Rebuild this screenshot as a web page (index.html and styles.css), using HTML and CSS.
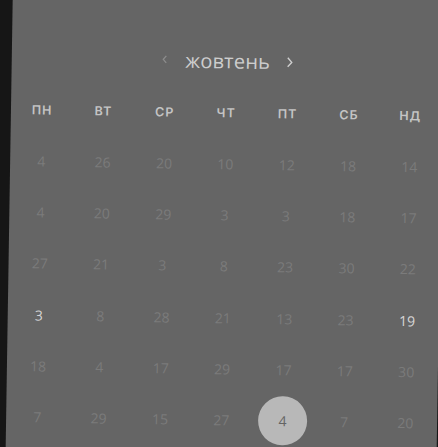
FILE: index.html
```html
<!DOCTYPE html>
<html lang="uk">
<head>
<meta charset="utf-8">
<title>Календар</title>
<link rel="stylesheet" href="styles.css">
</head>
<body>
<div class="panel">
  <div class="header">
    <svg class="chev chev-left" width="8" height="10" viewBox="0 0 8 10"><path d="M5.5 1.5 L2.5 5 L5.5 8.5" fill="none" stroke="currentColor" stroke-width="1.3"/></svg>
    <span class="month">жовтень</span>
    <svg class="chev chev-right" width="8" height="12" viewBox="0 0 8 12"><path d="M2 1.5 L6 6 L2 10.5" fill="none" stroke="currentColor" stroke-width="1.4"/></svg>
  </div>
  <div class="grid">
    <div class="wd">ПН</div><div class="wd">ВТ</div><div class="wd">СР</div><div class="wd">ЧТ</div><div class="wd">ПТ</div><div class="wd">СБ</div><div class="wd">НД</div>

    <div class="d">4</div><div class="d">26</div><div class="d">20</div><div class="d">10</div><div class="d">12</div><div class="d">18</div><div class="d">14</div>
    <div class="d">4</div><div class="d">20</div><div class="d">29</div><div class="d">3</div><div class="d">3</div><div class="d">18</div><div class="d">17</div>
    <div class="d">27</div><div class="d">21</div><div class="d">3</div><div class="d">8</div><div class="d">23</div><div class="d">30</div><div class="d">22</div>
    <div class="d on">3</div><div class="d">8</div><div class="d">28</div><div class="d">21</div><div class="d">13</div><div class="d">23</div><div class="d on">19</div>
    <div class="d">18</div><div class="d">4</div><div class="d">17</div><div class="d">29</div><div class="d">17</div><div class="d">17</div><div class="d">30</div>
    <div class="d">7</div><div class="d">29</div><div class="d">15</div><div class="d">27</div><div class="d sel"><span class="dot">4</span></div><div class="d">7</div><div class="d">20</div>
  </div>
</div>
</body>
</html>
```

FILE: styles.css
```css
html, body {
  margin: 0;
  padding: 0;
  background: #161616;
  overflow: hidden;
  height: 100%;
}
body {
  font-family: "Open Sans", "Noto Sans", sans-serif;
}
.panel {
  width: 431px;
  height: 470px;
  margin: -20px 0 0 12.8px;
  background: #656565;
  transform-origin: 0 0;
  transform: rotate(0.9deg);
  padding-top: 54px;
  box-sizing: border-box;
}
.header {
  height: 50px;
  display: flex;
  align-items: center;
  justify-content: center;
}
.month {
  color: #cdcdcd;
  font-size: 20px;
  letter-spacing: 0.2px;
  line-height: 1;
  padding-bottom: 2px;
  margin: 0 16px 0 17px;
}
.chev { display: block; }
.chev-left { color: #8c8c8c; margin-top: -4px; }
.chev-right { color: #cfcfcf; margin-top: -2px; }
.grid {
  margin-left: 0.5px;
  width: 429.5px;
  display: grid;
  grid-template-columns: repeat(7, 1fr);
  grid-template-rows: 50.6px repeat(6, 51.3px);
}
.wd {
  display: flex;
  align-items: center;
  justify-content: center;
  color: #c4c4c4;
  font-family: Inter, "Noto Sans", sans-serif;
  font-weight: 600;
  font-size: 12.5px;
  letter-spacing: 1px;
}
.d {
  display: flex;
  align-items: center;
  justify-content: center;
  color: #7b7b7b;
  font-size: 14px;
}
.d.on { color: #d6d6d6; }
.dot {
  width: 48.6px;
  height: 48.6px;
  border-radius: 50%;
  background: #b8b8b8;
  color: #646464;
  display: flex;
  align-items: center;
  justify-content: center;
  font-size: 14px;
}
```
